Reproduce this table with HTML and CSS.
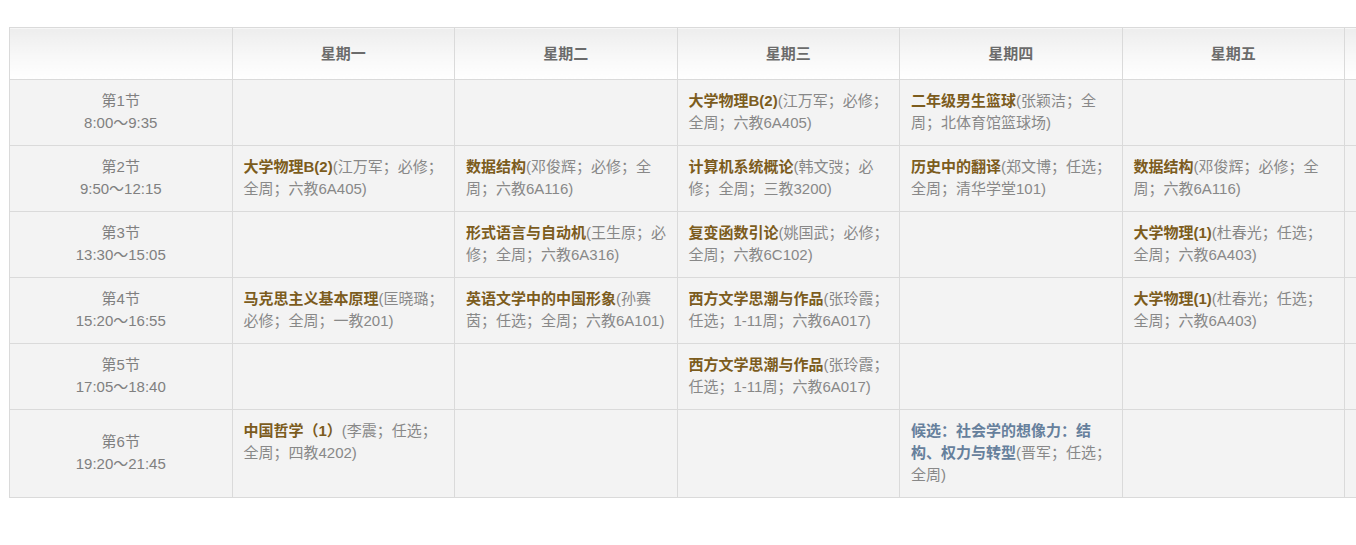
FILE: index.html
```html
<!DOCTYPE html>
<html lang="zh-CN">
<head>
<meta charset="utf-8">
<title>课表</title>
<link rel="stylesheet" href="styles.css">
</head>
<body>
<div class="page">
  <table class="schedule">
    <colgroup>
      <col class="c"><col class="c"><col class="c"><col class="c"><col class="c"><col class="c"><col class="c">
    </colgroup>
    <thead>
      <tr>
        <th></th>
        <th>星期一</th>
        <th>星期二</th>
        <th>星期三</th>
        <th>星期四</th>
        <th>星期五</th>
        <th></th>
      </tr>
    </thead>
    <tbody>
      <tr>
        <td class="time">第1节<br>8:00～9:35</td>
        <td></td>
        <td></td>
        <td class="course"><b>大学物理B(2)</b>(江万军；必修；<br>全周；六教6A405)</td>
        <td class="course"><b>二年级男生篮球</b>(张颖洁；全<br>周；北体育馆篮球场)</td>
        <td></td>
        <td></td>
      </tr>
      <tr>
        <td class="time">第2节<br>9:50～12:15</td>
        <td class="course"><b>大学物理B(2)</b>(江万军；必修；<br>全周；六教6A405)</td>
        <td class="course"><b>数据结构</b>(邓俊辉；必修；全<br>周；六教6A116)</td>
        <td class="course"><b>计算机系统概论</b>(韩文弢；必<br>修；全周；三教3200)</td>
        <td class="course"><b>历史中的翻译</b>(郑文博；任选；<br>全周；清华学堂101)</td>
        <td class="course"><b>数据结构</b>(邓俊辉；必修；全<br>周；六教6A116)</td>
        <td></td>
      </tr>
      <tr>
        <td class="time">第3节<br>13:30～15:05</td>
        <td></td>
        <td class="course"><b>形式语言与自动机</b>(王生原；必<br>修；全周；六教6A316)</td>
        <td class="course"><b>复变函数引论</b>(姚国武；必修；<br>全周；六教6C102)</td>
        <td></td>
        <td class="course"><b>大学物理(1)</b>(杜春光；任选；<br>全周；六教6A403)</td>
        <td></td>
      </tr>
      <tr>
        <td class="time">第4节<br>15:20～16:55</td>
        <td class="course"><b>马克思主义基本原理</b>(匡晓璐；<br>必修；全周；一教201)</td>
        <td class="course"><b>英语文学中的中国形象</b>(孙赛<br>茵；任选；全周；六教6A101)</td>
        <td class="course"><b>西方文学思潮与作品</b>(张玲霞；<br>任选；1-11周；六教6A017)</td>
        <td></td>
        <td class="course"><b>大学物理(1)</b>(杜春光；任选；<br>全周；六教6A403)</td>
        <td></td>
      </tr>
      <tr>
        <td class="time">第5节<br>17:05～18:40</td>
        <td></td>
        <td></td>
        <td class="course"><b>西方文学思潮与作品</b>(张玲霞；<br>任选；1-11周；六教6A017)</td>
        <td></td>
        <td></td>
        <td></td>
      </tr>
      <tr>
        <td class="time">第6节<br>19:20～21:45</td>
        <td class="course"><b>中国哲学（1）</b>(李震；任选；<br>全周；四教4202)</td>
        <td></td>
        <td></td>
        <td class="course"><b class="alt">候选：社会学的想像力：结<br>构、权力与转型</b>(晋军；任选；<br>全周)</td>
        <td></td>
        <td></td>
      </tr>
    </tbody>
  </table>
</div>
</body>
</html>
```

FILE: styles.css
```css
html, body {
  margin: 0;
  padding: 0;
  background: #ffffff;
}

body {
  font-family: "Liberation Sans", "Noto Sans CJK SC", sans-serif;
  font-size: 15px;
  line-height: 22px;
  color: #888888;
}

.page {
  width: 1356px;
  overflow: hidden;
  padding: 27px 0 0 9px;
  box-sizing: border-box;
}

.schedule {
  border-collapse: collapse;
  table-layout: fixed;
  width: 1557.5px;
  border: 1px solid #dadada;
}

.schedule .c {
  width: 222.5px;
}

.schedule th {
  height: 51px;
  padding: 0;
  background: linear-gradient(to bottom, #ededed 0%, #f7f7f7 50%, #ffffff 100%);
  border: 1px solid #dadada;
  font-weight: bold;
  color: #6b6b6b;
  text-align: center;
  vertical-align: middle;
}

.schedule td {
  background: #f3f3f3;
  border: 1px solid #dadada;
  padding: 10px 11px 11px;
  vertical-align: top;
  height: 44px;
}

.schedule td.time {
  text-align: center;
  vertical-align: middle;
  color: #808080;
}

.schedule td.course {
  white-space: nowrap;
}

.schedule td.course b {
  color: #7c5c1d;
  font-weight: bold;
}

.schedule td.course b.alt {
  color: #66809c;
}
```
